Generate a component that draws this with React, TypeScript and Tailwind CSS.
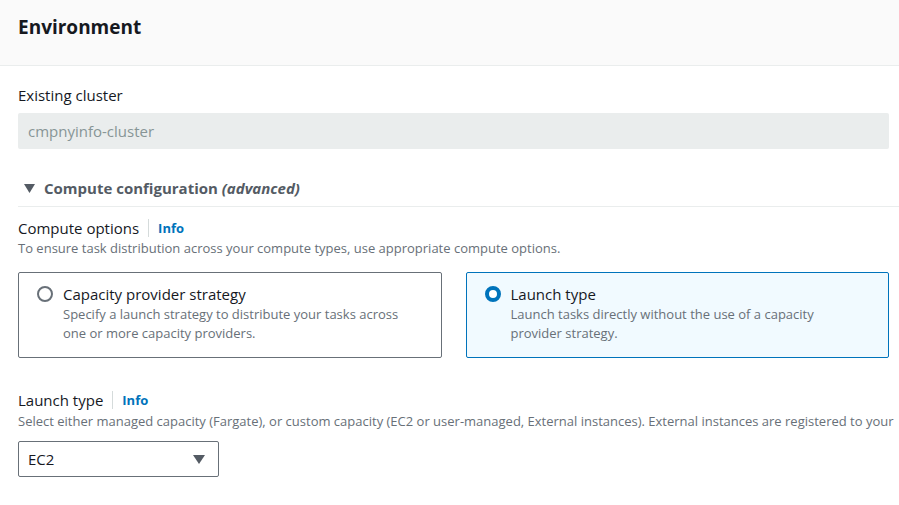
const font = { fontFamily: '"Open Sans", "Noto Sans", sans-serif' };

const Label = ({ text }: { text: string }) => (
  <div className="flex items-center text-[15px] text-[#16191f] leading-[22px]">
    <span>{text}</span>
    <span className="mx-[9px] h-[18px] border-l border-[#d5dbdb]" />
    <span className="text-[13px] font-bold text-[#0073bb]">Info</span>
  </div>
);

const Option = ({
  title,
  desc,
  checked,
}: {
  title: string;
  desc: string;
  checked?: boolean;
}) => (
  <div
    className={
      checked
        ? "flex-1 h-[86px] rounded-[2px] border border-[#0073bb] bg-[#f1faff] pl-[18px] pr-4 pt-[10px]"
        : "flex-1 h-[86px] rounded-[2px] border border-[#687078] bg-white pl-[18px] pr-4 pt-[10px]"
    }
  >
    <div className="flex gap-[10px]">
      {checked ? (
        <span className="mt-[3px] h-[16px] w-[16px] shrink-0 rounded-full border-[4px] border-[#0073bb] bg-white" />
      ) : (
        <span className="mt-[3px] h-[16px] w-[16px] shrink-0 rounded-full border-2 border-[#687078] bg-white" />
      )}
      <div>
        <div className="text-[15px] leading-[22px] text-[#16191f]">{title}</div>
        <div className="text-[13px] leading-[19px] text-[#687078] max-w-[350px]">{desc}</div>
      </div>
    </div>
  </div>
);

export default function App() {
  return (
    <div className="w-[899px] h-[505px] overflow-hidden bg-white" style={font}>
      <div className="h-[66px] bg-[#fafafa] border-b border-[#eaeded] px-[18px] flex items-center pb-[10px]">
        <h1 className="text-[19px] font-bold text-[#16191f]">Environment</h1>
      </div>

      <div className="pl-[18px] pt-[18px]">
        <div className="text-[15px] leading-[22px] text-[#16191f]">Existing cluster</div>
        <div className="mt-[7px] mr-[10px] h-[36px] rounded-[2px] bg-[#eaeded] px-[10px] flex items-center text-[15px] text-[#879596]">
          cmpnyinfo-cluster
        </div>

        <div className="mt-[28px] flex items-center gap-[9px] pl-[6px] pb-[7px] border-b border-[#eaeded] text-[15px] leading-[22px] font-bold text-[#545b64]">
          <svg width="11" height="9" viewBox="0 0 11 9">
            <path d="M0 0h11L5.5 9z" fill="#545b64" />
          </svg>
          <span>
            Compute configuration <i>(advanced)</i>
          </span>
        </div>

        <div className="mt-[10px]">
          <Label text="Compute options" />
          <div className="text-[13px] leading-[18px] text-[#687078]">
            To ensure task distribution across your compute types, use appropriate compute options.
          </div>
        </div>

        <div className="mt-[15px] mr-[10px] flex gap-[24px]">
          <Option
            title="Capacity provider strategy"
            desc="Specify a launch strategy to distribute your tasks across one or more capacity providers."
          />
          <Option
            checked
            title="Launch type"
            desc="Launch tasks directly without the use of a capacity provider strategy."
          />
        </div>

        <div className="mt-[31px]">
          <Label text="Launch type" />
          <div className="mt-[1px] text-[13px] leading-[19px] text-[#687078] whitespace-nowrap">
            Select either managed capacity (Fargate), or custom capacity (EC2 or user-managed, External instances). External instances are registered to your
          </div>
        </div>

        <div className="mt-[10px] w-[201px] h-[36px] rounded-[2px] border border-[#687078] flex items-center justify-between pl-[9px] pr-[13px] text-[15px] text-[#16191f]">
          <span>EC2</span>
          <svg width="12" height="9" viewBox="0 0 12 9">
            <path d="M0 0h12L6 9z" fill="#545b64" />
          </svg>
        </div>
      </div>
    </div>
  );
}
